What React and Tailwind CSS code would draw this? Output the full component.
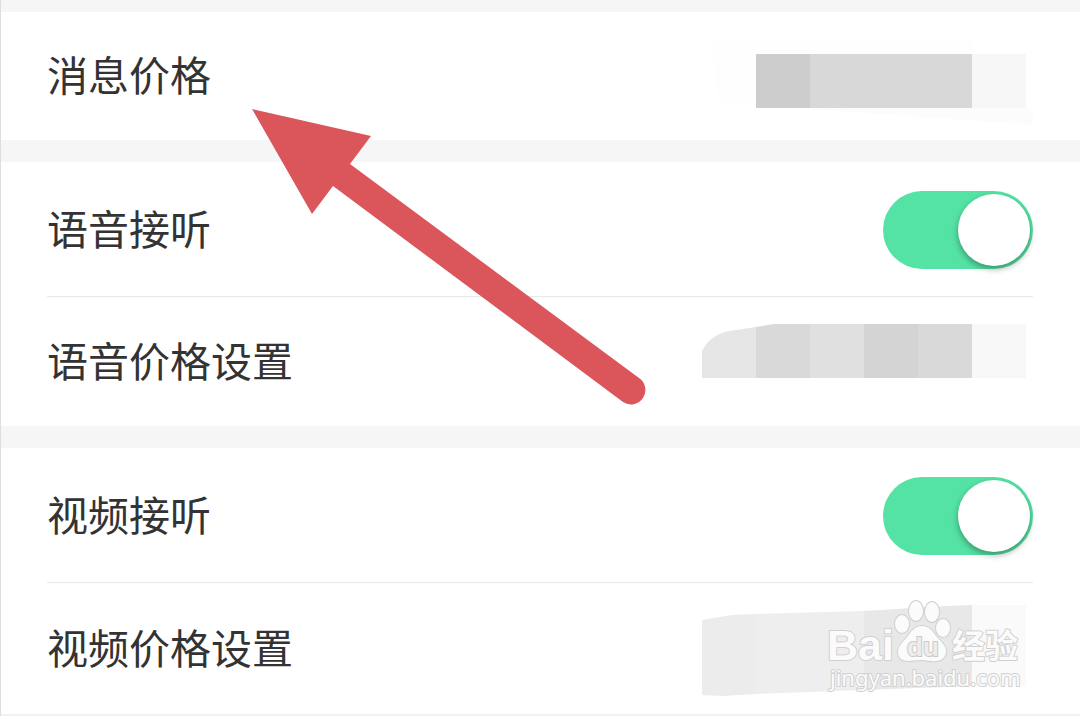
import { useState } from "react";

function Row({ className = "", children }) {
  return (
    <div className={`flex items-center justify-between ${className}`}>
      {children}
    </div>
  );
}

function Switch({ id }) {
  const [on, setOn] = useState(true);
  return (
    <input
      id={id}
      type="checkbox"
      role="switch"
      checked={on}
      onChange={(e) => setOn(e.target.checked)}
      className="flex h-[78px] w-[150px] shrink-0 cursor-pointer appearance-none items-center rounded-full bg-gray-200 p-[3px] before:block before:size-[72px] before:rounded-full before:bg-white before:shadow-[0_3px_6px_rgba(0,0,0,0.35)] checked:justify-end checked:bg-[#54e3a4]"
    />
  );
}

function MessageMosaic() {
  return (
    <svg className="shrink-0" width="331" height="128" viewBox="0 0 331 128" aria-hidden="true">
      <path d="M10 28h260v14H54v54l-38-8z" fill="#fefefe" />
      <path d="M270 42h54v54l54 12v8L108 97z" fill="#fcfcfc" />
      <rect x="54" y="42" width="54" height="54" fill="#cdcdcd" />
      <rect x="108" y="42" width="162" height="54" fill="#d8d8d8" />
      <rect x="270" y="42" width="54" height="54" fill="#f7f7f7" />
    </svg>
  );
}

function VoiceMosaic() {
  return (
    <svg className="shrink-0" width="331" height="129" viewBox="0 0 331 129" aria-hidden="true">
      <path d="M0 54Q8 38 27 34l27-4v51H0z" fill="#e6e6e6" />
      <path d="M54 30l18-3h36v54H54z" fill="#d9d9d9" />
      <rect x="108" y="27" width="54" height="54" fill="#e0e0e0" />
      <rect x="162" y="27" width="54" height="54" fill="#d4d4d4" />
      <rect x="216" y="27" width="54" height="54" fill="#d9d9d9" />
      <rect x="270" y="27" width="54" height="54" fill="#f8f8f8" />
    </svg>
  );
}

function VideoMosaic() {
  return (
    <svg className="shrink-0" width="331" height="131" viewBox="0 0 331 131" aria-hidden="true">
      <path d="M0 37l30-5 24-1v80l-34 2-20-1z" fill="#ececec" />
      <path d="M54 31l108-3v79l-108 4z" fill="#eeeeee" />
      <path d="M162 28l82-5 26-1v81l-108 4z" fill="#e8e8e8" />
      <path d="M270 22h54v81h-54z" fill="#fafafa" />
    </svg>
  );
}

function Arrow() {
  return (
    <svg
      className="pointer-events-none absolute top-[109px] left-[251px]"
      width="394"
      height="296"
      viewBox="0 0 394 296"
      aria-hidden="true"
    >
      <path
        d="M0 0L119 27L98 55L387 269A14 14 0 0 1 371 293L81 77L60 105Z"
        fill="#db565b"
      />
    </svg>
  );
}

function Watermark() {
  return (
    <svg
      className="pointer-events-none absolute right-[50px] bottom-4"
      width="210"
      height="104"
      viewBox="820 596 210 104"
      role="img"
      aria-label="Baidu 经验"
    >
      <g fill="#fbfbfb" stroke="#d0d0d0" strokeWidth="2" paintOrder="stroke" strokeLinejoin="round">
        <text x="827" y="660" className="font-['Liberation_Sans',sans-serif] text-[43px] font-bold">Bai</text>
        <ellipse cx="902" cy="624" rx="7" ry="9" />
        <ellipse cx="916" cy="611" rx="7" ry="10" />
        <ellipse cx="932" cy="612" rx="7" ry="10" />
        <ellipse cx="943" cy="628" rx="7" ry="9" />
        <path d="M922 626C914 626 911 632 907 637C903 642 898 646 898 652C898 658 902 661 908 661C913 661 917 660 922 660C927 660 931 662 936 661C942 661 946 657 946 651C946 645 940 641 936 636C932 630 929 626 922 626Z" />
        <text x="907" y="656" fill="#ededed" stroke="#c8c8c8" className="font-['Liberation_Sans',sans-serif] text-[26px] font-bold">du</text>
        <text x="952" y="658" className="font-['Noto_Sans_CJK_SC',sans-serif] text-[33px] font-bold">经验</text>
        <text x="830" y="686" className="font-['Noto_Sans',sans-serif] text-[22px]">jingyan.baidu.com</text>
      </g>
    </svg>
  );
}

export default function App() {
  return (
    <main className="relative min-h-screen border-l border-[#dedede] bg-[#f6f6f6] pt-3 font-['Noto_Sans_CJK_SC',sans-serif] text-[41px] leading-[60px] text-[#333333]">
      <div className="flex flex-col gap-[22px]">
        <section className="bg-white pr-[47px] pl-[46px]">
          <Row className="h-32">
            <span className="pb-1.5">消息价格</span>
            <MessageMosaic />
          </Row>
        </section>
        <section className="bg-white pr-[47px] pl-[46px]">
          <Row className="h-[134px] pt-0.5">
            <label htmlFor="voice" className="pb-1.5">语音接听</label>
            <Switch id="voice" />
          </Row>
          <Row className="border-t border-[#e8e8e8]">
            <span className="pb-1.5">语音价格设置</span>
            <VoiceMosaic />
          </Row>
        </section>
        <section className="bg-white pr-[47px] pl-[46px]">
          <Row className="h-[134px] pt-0.5">
            <label htmlFor="video" className="pb-1.5">视频接听</label>
            <Switch id="video" />
          </Row>
          <Row className="border-t border-[#e8e8e8]">
            <span className="pb-1.5">视频价格设置</span>
            <VideoMosaic />
          </Row>
        </section>
      </div>
      <div className="h-[2px] bg-[#f2f2f2]" />
      <Arrow />
      <Watermark />
    </main>
  );
}
